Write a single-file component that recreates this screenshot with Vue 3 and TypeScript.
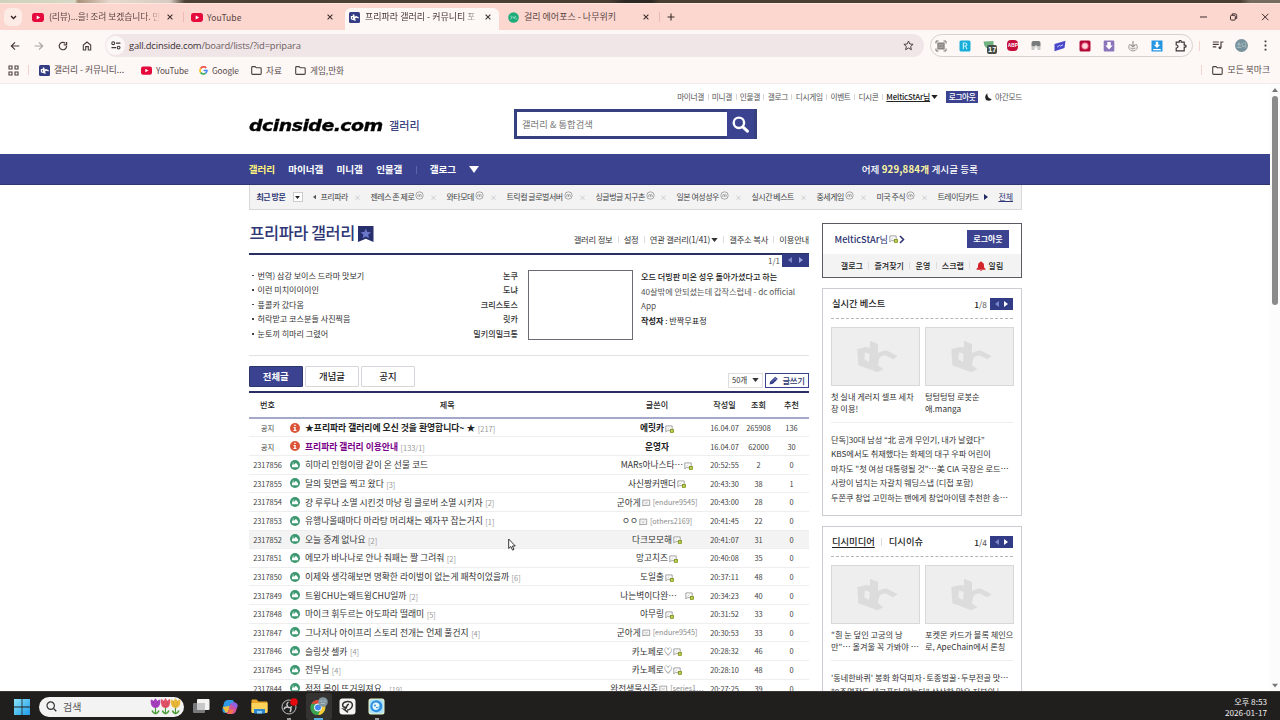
<script setup lang="ts">
interface Row {
  no: string
  kind: 'info' | 'pic'
  title: string
  replies?: string
  writer: string
  badge?: 'fixed' | 'half'
  id?: string
  date: string
  views: string
  rec: string
  cls?: string
}

interface Widget {
  titles: string[]
  page: string
  total: string
  cards: string[][]
  links: string[]
}

const utilLinks = ['마이너갤', '미니갤', '인물갤', '갤로그', '디시게임', '이벤트', '디시콘']

const recent = [
  { name: '프리파라', m: false },
  { name: '젠레스 존 제로', m: true },
  { name: '와타모데', m: true },
  { name: '트릭컬 글로벌서버', m: true },
  { name: '싱글벙글 지구촌', m: true },
  { name: '일본 여성성우', m: true },
  { name: '실시간 베스트', m: false },
  { name: '중세게임', m: true },
  { name: '미국 주식', m: true },
  { name: '트레이딩카드', m: false },
]

const issues = [
  ['번역) 삼강 보이스 드라마 맛보기', '논쿠'],
  ['이런 미치이이이인', '도냐'],
  ['픞콜카 갔다옴', '크리스토스'],
  ['허락받고 코스분들 사진찍음', '릿카'],
  ['눈토끼 히마리 그렸어', '밀키의밀크통'],
]

const rows: Row[] = [
  { no: '공지', kind: 'info', title: '★프리파라 갤러리에 오신 것을 환영합니다~ ★', replies: '217', writer: '에릿카', badge: 'fixed', date: '16.04.07', views: '265908', rec: '136', cls: 'notice' },
  { no: '공지', kind: 'info', title: '프리파라 갤러리 이용안내', replies: '133/1', writer: '운영자', date: '16.04.07', views: '62000', rec: '30', cls: 'notice visited' },
  { no: '2317856', kind: 'pic', title: '히마리 인형이랑 같이 온 선물 코드', writer: 'MARs아나스타⋯', badge: 'fixed', date: '20:52:55', views: '2', rec: '0' },
  { no: '2317855', kind: 'pic', title: '달의 뒷면을 찍고 왔다', replies: '3', writer: '사신짱커맨더', badge: 'fixed', date: '20:43:30', views: '38', rec: '1' },
  { no: '2317854', kind: 'pic', title: '걍 루루나 소멸 시킨것 마냥 링 클로버 소멸 시키자', replies: '2', writer: '군아게', badge: 'half', id: '[endure9545]', date: '20:43:00', views: '28', rec: '0' },
  { no: '2317853', kind: 'pic', title: '유행나올때마다 마라탕 머리채는 왜자꾸 잡는거지', replies: '1', writer: 'ㅇㅇ', badge: 'half', id: '[others2169]', date: '20:41:45', views: '22', rec: '0' },
  { no: '2317852', kind: 'pic', title: '오늘 중계 없나요', replies: '2', writer: '다크모모해', badge: 'fixed', date: '20:41:07', views: '31', rec: '0', cls: 'hover' },
  { no: '2317851', kind: 'pic', title: '에모가 바나나로 안나 줘패는 짤 그려줘', replies: '2', writer: '망고치즈', badge: 'fixed', date: '20:40:08', views: '35', rec: '0' },
  { no: '2317850', kind: 'pic', title: '이제와 생각해보면 명확한 라이벌이 없는게 패착이었을까', replies: '6', writer: '도일출', badge: 'fixed', date: '20:37:11', views: '48', rec: '0' },
  { no: '2317849', kind: 'pic', title: '트윙CHU는왜트윙CHU일까', replies: '2', writer: '나는벽이다완⋯', badge: 'fixed', date: '20:34:23', views: '40', rec: '0', cls: 'gap' },
  { no: '2317848', kind: 'pic', title: '마이크 휘두르는 아도파라 떨래미', replies: '5', writer: '야무링', badge: 'fixed', date: '20:31:52', views: '33', rec: '0' },
  { no: '2317847', kind: 'pic', title: '그나저나 아이프리 스토리 전개는 언제 풀건지', replies: '4', writer: '군아게', badge: 'half', id: '[endure9545]', date: '20:30:53', views: '33', rec: '0' },
  { no: '2317846', kind: 'pic', title: '슬링샷 셀카', replies: '4', writer: '카노페로♡', badge: 'fixed', date: '20:28:32', views: '46', rec: '0' },
  { no: '2317845', kind: 'pic', title: '전무님', replies: '4', writer: '카노페로♡', badge: 'fixed', date: '20:28:10', views: '48', rec: '0' },
  { no: '2317844', kind: 'pic', title: '점점 몸이 뜨거워져요..', replies: '19', writer: '완전생물신쥬', badge: 'half', id: '[series1⋯', date: '20:27:25', views: '39', rec: '0' },
]

const widgets: Widget[] = [
  {
    titles: ['실시간 베스트'],
    page: '1',
    total: '/8',
    cards: [['첫 실내 게러지 셀프 세차', '장 이용!'], ['텅텅텅텅 로봇순', '애.manga']],
    links: [
      '단독]30대 남성 “北 공개 무인기, 내가 날렸다”',
      'KBS에서도 취재했다는 화제의 대구 우파 어린이',
      '마차도 "첫 여성 대통령될 것"⋯美 CIA 국장은 로드⋯',
      '사랑이 넘치는 자갈치 웨딩스냅 (디첩 포함)',
      '두쫀쿠 창업 고민하는 팬에게 창업아이템 추천한 송⋯',
    ],
  },
  {
    titles: ['디시미디어', '디시이슈'],
    page: '1',
    total: '/4',
    cards: [['"흰 눈 덮인 고궁의 낭', '만"⋯ 올겨울 꼭 가봐야 ⋯'], ['포켓몬 카드가 블록 체인으', '로, ApeChain에서 론칭']],
    links: [
      "'동네한바퀴' 봉화 화덕피자·토종벌꿀·두부전골 맛⋯",
      '"8주명작도 세크폰다 맞는다" 삼삼한 많은 저분의 |',
    ],
  },
]
</script>

<template>
  <div class="screen">
    <svg class="defs" width="0" height="0">
      <symbol id="yt" viewBox="0 0 12 9"><rect width="12" height="9" rx="2.4" fill="#e5093c" /><path d="M4.7 2.5v4L8.2 4.5z" fill="#fff" /></symbol>
      <symbol id="dc" viewBox="0 0 11 11"><rect width="11" height="11" rx="1.5" fill="#343c83" /><path d="M1.800 4h2V2.200l1.700.6v1.600l1.800-.5 2.700 1.500-.6 1.200-2-.8-1.300.7v.9l1.200.7-1.200.6-4.300-1.500zM3 5v1.400l.9.3V5.200z" fill="#fff" fill-rule="evenodd" /></symbol>
      <symbol id="close" viewBox="0 0 6 6"><path d="M.6.6l4.800 4.800M5.400.6L.6 5.400" stroke="#40302f" stroke-width="1.100" /></symbol>
      <symbol id="folder" viewBox="0 0 11 9"><path d="M.7 7.500v-6q0-.9.9-.9h2.500l1.200 1.200h4q.9 0 .9.900v4.900q0 .8-.9.800H1.600q-.9 0-.9-.9z" fill="none" stroke="#4b4040" stroke-width="1.100" /></symbol>
      <symbol id="info" viewBox="0 0 10 10"><circle cx="5" cy="5" r="5" fill="#dd5538" /><path d="M4.200 1.800h1.500v1.300H4.200zM3.600 4h2.100v3h.8v1H3.500V7h.8V5h-.7z" fill="#fff" /></symbol>
      <symbol id="pic" viewBox="0 0 10 10"><circle cx="5" cy="5" r="5" fill="#3c9870" /><path d="M2 7.300V4.900l1.100-.8 1 .7L5.600 3l1 .5 1.500 2v1.800z" fill="#fff" /><circle cx="3.200" cy="3.100" r=".7" fill="#d8eee4" /></symbol>
      <symbol id="fixed" viewBox="0 0 9 8"><path d="M.8.9h6.400v4.800H2.300L.8 6.900z" fill="#fafafa" stroke="#8f918d" stroke-width=".8" /><path d="M2.500 4.400L4 2.800" stroke="#bbb" stroke-width=".7" /><rect x="5.200" y="4.300" width="3.500" height="3.300" fill="#a4b914" stroke="#68780e" stroke-width=".5" /><rect x="6.400" y="5.400" width="1" height="1.100" fill="#fff" /></symbol>
      <symbol id="half" viewBox="0 0 9 8"><path d="M.8 1.100h6.900v5.300H2L.8 7z" fill="#f8f8f8" stroke="#929292" stroke-width=".8" /><path d="M2.500 3.200L4 4.500l1.800-1.400" fill="none" stroke="#aaa" stroke-width=".8" /></symbol>
      <symbol id="down" viewBox="0 0 8 5"><path d="M0 0h8L4 5z" fill="currentColor" /></symbol>
      <symbol id="lt" viewBox="0 0 4 6"><path d="M4 0v6L0 3z" fill="currentColor" /></symbol>
      <symbol id="rt" viewBox="0 0 4 6"><path d="M0 0v6l4-3z" fill="currentColor" /></symbol>
    </svg>

    <div class="strip"></div>

    <div class="tabbar">
      <div class="tabsearch"><svg width="7" height="5" viewBox="0 0 7 5"><path d="M1 1l2.500 2.500L6 1" fill="none" stroke="#30201f" stroke-width="1.300" /></svg></div>
      <div class="tab t1"><svg width="12" height="9"><use href="#yt" /></svg><span class="fade">(리뷰)...을! 조려 보겠습니다. 만</span><svg class="x" width="6" height="6"><use href="#close" /></svg></div>
      <i class="tabsep"></i>
      <div class="tab t2"><svg width="12" height="9"><use href="#yt" /></svg><span>YouTube</span><svg class="x" width="6" height="6"><use href="#close" /></svg></div>
      <div class="tab t3"><svg width="11" height="11"><use href="#dc" /></svg><span class="fade">프리파라 갤러리 - 커뮤니티 포</span><svg class="x" width="6" height="6"><use href="#close" /></svg></div>
      <div class="tab t4"><svg width="11" height="11" viewBox="0 0 11 11"><circle cx="5.500" cy="5.500" r="5.300" fill="#20ab7b" /><path d="M2.400 4l1.800 1.500-1.800 1.500M5 4.400l1.200 2L7.600 4M7.500 6.800h1.400" fill="none" stroke="#b9f0dc" stroke-width=".8" /></svg><span>걸리 에어포스 - 나무위키</span><svg class="x" width="6" height="6"><use href="#close" /></svg></div>
      <i class="tabsep"></i>
      <svg class="plus" width="8" height="8" viewBox="0 0 8 8"><path d="M4 .5v7M.5 4h7" stroke="#3c2c2b" stroke-width="1.100" /></svg>
      <svg class="wins" width="72" height="10" viewBox="0 0 72 10"><path d="M1 5h7M63 1.800l6.400 6.400M69.400 1.800L63 8.200" stroke="#3d2c2b" stroke-width="1" /><rect x="31.500" y="3.300" width="4.800" height="4.800" rx="1" fill="none" stroke="#3d2c2b" /><path d="M33.200 3V1.900h3q1.500 0 1.500 1.500v3H36.600" fill="none" stroke="#3d2c2b" /></svg>
    </div>

    <div class="toolbar">
      <div class="navicons">
        <svg width="10" height="10" viewBox="0 0 10 10"><path d="M9.300 5H1.400M5 1.300L1.300 5 5 8.700" fill="none" stroke="#4a3c3c" stroke-width="1.200" /></svg>
        <svg width="10" height="10" viewBox="0 0 10 10"><path d="M.7 5h7.900M5 1.300L8.700 5 5 8.700" fill="none" stroke="#aaa0a0" stroke-width="1.100" /></svg>
        <svg width="10" height="10" viewBox="0 0 10 10"><path d="M8.600 5A3.700 3.700 0 1 1 7.400 2.300M8.600.9v2.900H5.700" fill="none" stroke="#4a3c3c" stroke-width="1.200" /></svg>
        <svg width="10" height="10" viewBox="0 0 10 10"><path d="M1.300 9V4.100L5 1l3.700 3.100V9H6.300V5.600H3.700V9z" fill="none" stroke="#4a3c3c" stroke-width="1.100" /></svg>
      </div>
      <div class="address">
        <div class="site"><svg width="10" height="9" viewBox="0 0 10 9"><circle cx="2.200" cy="2.200" r="1.400" fill="none" stroke="#3f3434" stroke-width="1.100" /><circle cx="7.600" cy="6.600" r="1.400" fill="none" stroke="#3f3434" stroke-width="1.100" /><path d="M5 2.200h4.400M.5 6.600h4.500" stroke="#3f3434" stroke-width="1.200" /></svg></div>
        <span class="url"><b>gall.dcinside.com</b>/board/lists/?id=pripara</span>
        <svg class="star" width="11" height="11" viewBox="0 0 11 11"><path d="M5.500 1l1.300 3 3.300.3-2.500 2.200.8 3.200-2.900-1.700-2.900 1.700.8-3.200L.9 4.300 4.200 4z" fill="none" stroke="#4d3e3f" stroke-width="1" /></svg>
      </div>
      <div class="exts">
        <svg width="12" height="12" viewBox="0 0 12 12"><path d="M1 3.500V1h2.500M8.500 1H11v2.500M11 8.500V11H8.500M3.500 11H1V8.500" fill="none" stroke="#77726f" /><rect x="2.300" y="2.500" width="7.400" height="7" fill="#888480" /><path d="M3.500 4.500h5M3.500 6h5M3.500 7.500h5" stroke="#bbb8b4" stroke-width=".6" /></svg>
        <svg width="12" height="12" viewBox="0 0 12 12"><rect x=".5" y=".5" width="11" height="11" rx="1.500" fill="#16add8" /><path d="M4.300 9.300V3h2q1.600 0 1.600 1.500T6.300 6h-2M6.300 6l1.800 3.200" fill="none" stroke="#c5f3ff" stroke-width="1.100" /></svg>
        <span class="ext17"><svg width="12" height="12" viewBox="0 0 12 12"><path d="M.5 1.500l10-.5v4q0 3-3 4.500Q1 9 .5 1.500z" fill="#70b282" /></svg><i>17</i></span>
        <span class="abp">ABP</span>
        <svg width="12" height="12" viewBox="0 0 12 12"><path d="M1.500 3q0-2 2-2h5q2 0 2 2v3h-9z" fill="#777b79" /><path d="M1.500 6h9v4h-3V7.300h-3V10h-3z" fill="#c5c7c5" /><path d="M6 5v3" stroke="#eee" /></svg>
        <svg width="12" height="12" viewBox="0 0 12 12"><path d="M.5 4l11-3.200L10.500 8 .5 11.300z" fill="#4a49ca" /><path d="M3.200 7l2.400-1.600.8.700L9 4.700" stroke="#cfd0ff" fill="none" /></svg>
        <svg width="12" height="12" viewBox="0 0 12 12"><rect x=".5" y=".5" width="11" height="11" rx="1.500" fill="#b20936" /><circle cx="6" cy="6" r="3.300" fill="#ffd4dc" stroke="#e85074" stroke-width=".8" /></svg>
        <svg width="12" height="12" viewBox="0 0 12 12"><rect x=".7" y=".5" width="10.600" height="11" rx="1" fill="#8c74b9" /><path d="M4.300 2h3.400v3.500h2L6 9.600 2.300 5.500h2z" fill="#fff" /></svg>
        <svg width="12" height="12" viewBox="0 0 12 12"><path d="M6 1v6M3.500 4.500L6 7l2.500-2.500" stroke="#999491" fill="none" stroke-width="1.200" /><path d="M3 4q-2 2-1 4.500Q3.500 11 6 11t4-2.500Q11 6 9 4M3.500 8Q6 10 8.500 8" fill="none" stroke="#9b9793" /></svg>
        <svg width="12" height="12" viewBox="0 0 12 12"><rect x=".5" y=".5" width="11" height="11" fill="#2796e2" /><path d="M4.800 1.800h2.400v3h2L6 8 2.800 4.800h2zM2.200 9h7.600v1.200H2.200z" fill="#fff" /></svg>
        <svg width="12" height="12" viewBox="0 0 12 12"><path d="M1.200 2.200h3V1.300q0-.8 1-.8t1 .8v.9h3v3h.9q1 0 1 1t-1 1h-.9v3.600h-8V8q1.800 0 1.800-1.500T1.200 5z" fill="none" stroke="#3d3436" stroke-width="1.200" /></svg>
      </div>
      <i class="sep"></i>
      <svg class="music" width="12" height="9" viewBox="0 0 12 9"><path d="M.8 1h6M.8 3.400h6M.8 5.800h3.500M9 6.500V1h2.500" fill="none" stroke="#4a3d3d" stroke-width="1.200" /><circle cx="7.900" cy="6.800" r="1.400" fill="#4a3d3d" /></svg>
      <span class="profile">소디</span>
      <svg class="dots" width="3" height="11" viewBox="0 0 3 11"><path d="M.6.500h1.800v1.800H.6zM.6 4.600h1.800v1.800H.6zM.6 8.700h1.800v1.800H.6z" fill="#44393a" /></svg>
    </div>

    <div class="bookmarks">
      <svg width="11" height="11" viewBox="0 0 11 11"><path d="M1 1h3v3H1zM7 1h3v3H7zM1 7h3v3H1zM7 7h3v3H7z" fill="none" stroke="#4c4041" stroke-width="1.100" /></svg>
      <i class="sep"></i>
      <span class="bm b1"><svg width="11" height="11"><use href="#dc" /></svg>갤러리 - 커뮤니티...</span>
      <span class="bm b2"><svg width="11" height="9"><use href="#yt" /></svg>YouTube</span>
      <span class="bm b3"><svg width="9" height="9" viewBox="0 0 10 10"><g fill="none" stroke-width="1.700"><path d="M8 2.200A3.900 3.900 0 0 0 1.800 2.800" stroke="#ea4335" /><path d="M1.800 2.800a3.900 3.900 0 0 0 0 4.400" stroke="#fbbc05" /><path d="M1.800 7.200A3.900 3.900 0 0 0 7.400 8" stroke="#34a853" /><path d="M7.400 8A3.900 3.900 0 0 0 8.900 5.100H5.200" stroke="#4285f4" /></g></svg>Google</span>
      <span class="bm b4"><svg width="11" height="9"><use href="#folder" /></svg>자료</span>
      <span class="bm b5"><svg width="11" height="9"><use href="#folder" /></svg>게임,만화</span>
      <i class="sep s2"></i>
      <span class="bm b6"><svg width="11" height="9"><use href="#folder" /></svg>모든 북마크</span>
    </div>

    <div class="viewport">
      <div class="page">
        <header class="top">
          <div class="util">
            <template v-for="u in utilLinks" :key="u"><span>{{ u }}</span><i></i></template>
            <b>MelticStAr님</b><svg class="caret" width="7" height="4"><use href="#down" /></svg>
            <span class="logout">로그아웃</span>
            <svg class="moon" width="7" height="8" viewBox="0 0 7 8"><path d="M2.500.2Q1.600 4.700 6.800 6.200 5 8.200 2.500 7.600 0 6.800.2 4 .4 1.200 2.500.2z" fill="#222" /></svg>
            <span>야간모드</span>
          </div>
          <div class="brand">
            <span class="logo">dcinside.com</span><span class="logo2">갤러리</span>
            <div class="search">
              <span>갤러리 &amp; 통합검색</span>
              <div><svg width="17" height="17" viewBox="0 0 17 17"><circle cx="6.900" cy="6.800" r="5.200" fill="none" stroke="#fff" stroke-width="2.400" /><path d="M10.800 10.800l4.600 4.400" stroke="#fff" stroke-width="3" stroke-linecap="round" /></svg></div>
            </div>
          </div>
        </header>

        <nav class="gnb">
          <span class="on">갤러리</span><span>마이너갤</span><span>미니갤</span><span>인물갤</span><i></i><span>갤로그</span><svg width="10" height="7" viewBox="0 0 10 7"><path d="M0 0h10L5 7z" fill="#fff" /></svg>
          <p>어제 <b>929,884개</b> 게시글 등록</p>
        </nav>

        <div class="recent">
          <b>최근 방문</b>
          <span class="drop"><svg width="5" height="3"><use href="#down" /></svg></span>
          <svg class="prev" width="3" height="6"><use href="#lt" /></svg>
          <div class="visits">
            <span v-for="r in recent" :key="r.name">{{ r.name }}<svg v-if="r.m" width="9" height="9" viewBox="0 0 9 9"><circle cx="4.500" cy="4.500" r="3.700" fill="none" stroke="#888" stroke-width=".7" /><path d="M2.800 6V3.900q.8-.7 1.700 0V6M4.500 3.900q.9-.7 1.700 0V6" fill="none" stroke="#777" stroke-width=".6" /></svg><em v-if="r.name !== '트레이딩카드'">×</em></span>
          </div>
          <svg class="next" width="4" height="6"><use href="#rt" /></svg>
          <u>전체</u>
        </div>

        <main class="main">
          <section class="left">
            <div class="ghead">
              <h1>프리파라 갤러리</h1>
              <svg width="16" height="16" viewBox="0 0 16 16"><path d="M0 0h15.500v16L7.800 12.800 0 16z" fill="#272f6d" /><path d="M7.800 2.500l1.500 3.400 3.700.4-2.800 2.400.8 3.600-3.200-1.900-3.200 1.900.8-3.600-2.800-2.400 3.700-.4z" fill="#6c78c9" /></svg>
              <div class="gmenu"><span>갤러리 정보</span><i></i><span>설정</span><i></i><span>연관 갤러리(1/41)<svg width="6" height="4"><use href="#down" /></svg></span><i></i><span>갤주소 복사</span><i></i><span>이용안내</span></div>
            </div>
            <div class="issue">
              <ul>
                <li v-for="it in issues" :key="it[0]"><span><i></i>{{ it[0] }}</span><b>{{ it[1] }}</b></li>
              </ul>
              <div class="frame"></div>
              <div class="digest">
                <b>오드 더빙판 미온 성우 돌아가셨다고 하는</b>
                <p>40살밖에 안되셨는데 갑작스럽네 - dc official<br />App</p>
                <span class="by"><b>작성자</b> : 반짝무표정</span>
              </div>
              <div class="pager"><span>1/1</span><div class="arrows dim"><svg width="4" height="6"><use href="#lt" /></svg><svg width="4" height="6"><use href="#rt" /></svg></div></div>
            </div>
            <div class="tabs">
              <span class="on">전체글</span><span>개념글</span><span>공지</span>
              <div class="sel">50개<svg width="7" height="4"><use href="#down" /></svg></div>
              <div class="write"><svg width="10" height="9" viewBox="0 0 10 9"><path d="M.5 8.500l.8-3L6.200.8l2.600 2.300-4.900 4.700z" fill="#303a86" /><path d="M2.500 6L7 2M5.300 1.700l2.600 2.300" stroke="#aab0df" stroke-width=".5" /></svg>글쓰기</div>
            </div>
            <div class="table">
              <div class="row head"><span>번호</span><span>제목</span><span>글쓴이</span><span>작성일</span><span>조회</span><span>추천</span></div>
              <div v-for="r in rows" :key="r.date + r.title" class="row" :class="r.cls">
                <span class="num">{{ r.no }}</span>
                <span class="title"><svg width="10" height="10"><use :href="'#' + r.kind" /></svg><a>{{ r.title }}</a><em v-if="r.replies">[{{ r.replies }}]</em></span>
                <span class="writer"><a>{{ r.writer }}</a><svg v-if="r.badge" width="9" height="8"><use :href="'#' + r.badge" /></svg><em v-if="r.id">{{ r.id }}</em></span>
                <span class="num">{{ r.date }}</span>
                <span class="num">{{ r.views }}</span>
                <span class="num">{{ r.rec }}</span>
              </div>
            </div>
          </section>

          <aside class="right">
            <div class="login">
              <div class="me"><b>MelticStAr</b>님<svg width="9" height="8"><use href="#fixed" /></svg><svg width="6" height="9" viewBox="0 0 6 9"><path d="M1 1l3.500 3.500L1 8" fill="none" stroke="#2a3170" stroke-width="1.500" /></svg><span>로그아웃</span></div>
              <div class="mymenu"><span>갤로그</span><i></i><span>즐겨찾기</span><i></i><span>운영</span><i></i><span>스크랩</span><i></i><span><svg width="10" height="10" viewBox="0 0 10 10"><path d="M5 .5q1 0 1 .8 2 .7 2 3v2L9.500 8v.7H.5V8L2 6.300v-2q0-2.300 2-3 0-.8 1-.8zM3.800 9h2.400L5 10z" fill="#d3242b" /></svg>알림</span></div>
            </div>
            <div v-for="w in widgets" :key="w.titles[0]" class="widget">
              <div class="whead">
                <template v-for="(t, i) in w.titles" :key="t"><i v-if="i"></i><b :class="{ under: w.titles.length > 1 && i === 0 }">{{ t }}</b></template>
                <span><b>{{ w.page }}</b>{{ w.total }}</span>
                <div class="arrows"><svg width="4" height="6"><use href="#lt" /></svg><svg width="4" height="6"><use href="#rt" /></svg></div>
              </div>
              <div class="cards">
                <div v-for="c in w.cards" :key="c[0]">
                  <div class="thumb"><svg width="88" height="58" viewBox="49 524 264 174"><path d="M125 587L151 581L163 583V562L187 572V599Q202 589 215 592L246 609L232 618L212 607Q196 605 190 618L187 636L203 648L185 657L128 636ZM148 597L162 602L160 626L146 618Z" fill="#dcdcdd" fill-rule="evenodd" /></svg></div>
                  <p>{{ c[0] }}<br />{{ c[1] }}</p>
                </div>
              </div>
              <div class="links"><p v-for="l in w.links" :key="l">{{ l }}</p></div>
            </div>
          </aside>
        </main>
      </div>
      <div class="scroll"><svg width="6" height="4" viewBox="0 0 6 4"><path d="M0 4h6L3 0z" fill="#777" /></svg><div></div><svg width="6" height="5"><use href="#down" /></svg></div>
    </div>

    <footer class="taskbar">
      <svg class="win" width="16" height="16" viewBox="0 0 16 16"><defs><linearGradient id="wg" x2="1" y2="1"><stop stop-color="#8be4fb" /><stop offset="1" stop-color="#1d9ce8" /></linearGradient></defs><path d="M0 0h7.600v7.600H0zM8.400 0H16v7.600H8.400zM0 8.400h7.600V16H0zM8.400 8.400H16V16H8.400z" fill="url(#wg)" /></svg>
      <div class="find">
        <svg width="11" height="11" viewBox="0 0 11 11"><circle cx="4.700" cy="4.600" r="3.700" fill="none" stroke="#333" stroke-width="1.200" /><path d="M7.500 7.400l2.800 2.800" stroke="#333" stroke-width="1.300" /></svg>
        <span>검색</span>
        <svg width="31" height="17" viewBox="0 0 31 17"><g stroke="#4d9c3c" fill="none"><path d="M5.500 8v8M15.500 8v8M25.500 8v8" stroke-width="1.200" /><path d="M5.500 15.800Q3 15 2 12.500M5.500 15.800Q8 15 9 12.500M15.500 15.800Q13 15 12.500 12.500M15.500 15.800Q18 15 19 12.500M25.500 15.800Q23 15 22.500 12.500M25.500 15.800Q28 15 29 12.500" stroke-width="1.600" /></g><path d="M.8 1.500q2 0 2.700 1.500L5.500.3l2 2.700Q8.200 1.500 10.200 1.500 11.200 10 5.500 10T.8 1.500z" fill="#a83fc0" /><path d="M11 1q2 .3 2.500 2l2-3 2 3q.5-1.700 2.500-2 1 9-4.500 9T11 1z" fill="#e4536a" /><path d="M20.800 1.500q2 0 2.700 1.500l2-2.700 2 2.700q.7-1.500 2.700-1.500 1 8.500-4.700 8.500t-4.700-8.500z" fill="#ecba3a" /><path d="M3.500 3q-.5 4 2 6 2.500-2 2-6M13.500 3q-.5 4 2 6 2.500-2 2-6M23.500 3q-.5 4 2 6 2.500-2 2-6" fill="none" stroke="#0002" stroke-width=".8" /></svg>
      </div>
      <svg class="i1" width="17" height="15" viewBox="0 0 17 15"><rect x="0" y="4" width="12" height="10" rx="1" fill="#77797a" /><rect x="4" y="0" width="12.500" height="11" rx="1" fill="#f3f3f3" /><path d="M4 4h8v7H4z" fill="#c8c8c8" /></svg>
      <svg class="i2" width="16" height="16" viewBox="0 0 16 16"><path d="M6 1h4q1.500 0 2 2l.5 2-4 .5L6 12q-.5 2-2.500 2-3.500 0-3-4l1.500-6Q3 1 6 1z" fill="#2f9be8" /><path d="M.6 8L4 14q2 0 2.500-2L8 7z" fill="#f0bf3f" /><path d="M10 15H6q-1.200 0-1.500-1.500 1.500 0 2-2L8.500 5q.5-1.500 3-1.500 4 0 4 3.500L14 12q-1 3-4 3z" fill="#d154a2" /><path d="M9 5q.5-2 3.500-1.500 3 .5 3 3L15 9l-3-1z" fill="#8a63e4" /><path d="M7 10l5 1-2 4H6z" fill="#f4714f" /></svg>
      <svg class="i3" width="17" height="15" viewBox="0 0 17 15"><path d="M.5 1.500Q.5.500 1.500.500h4l2 2h8q1 0 1 1V13H.5z" fill="#e9a829" /><path d="M.5 4h16v9q0 1-1 1h-14q-1 0-1-1z" fill="#fcd35b" /><path d="M3 10h11v4.500H3z" fill="#2d87cf" /><path d="M6 12h5v2.500H6z" fill="#8ed0f4" /></svg>
      <svg class="i4 run" width="17" height="27" viewBox="0 0 17 17"><circle cx="8" cy="9" r="7" fill="#222" stroke="#bdbdbd" stroke-width="1" /><path d="M7.500 4q-3 2-.5 5 1.500 1.500 4-.5M7 9q-3.500-.5-4 2.500M9 9q2 2 0 5" fill="none" stroke="#ccc" stroke-width="1.400" /><circle cx="13" cy="4" r="3.800" fill="#e50910" /></svg>
      <div class="i5"><svg width="20" height="19" viewBox="0 0 20 19"><circle cx="9" cy="10.500" r="7.500" fill="#3ca350" /><path d="M2.500 6.800A7.500 7.500 0 0 1 15.500 6.800H9z" fill="#e34334" /><path d="M2.500 6.800l4 7L9 18Q3 18 1.700 12.500 1 9 2.500 6.800z" fill="#3ca350" /><path d="M15.500 6.800Q18 12.500 13.500 16.500 11.500 18 9 18l3.800-7.500L9 6.800z" fill="#f6c832" /><circle cx="9" cy="10.500" r="3.600" fill="#4286ee" stroke="#fff" stroke-width="1" /><circle cx="14" cy="5" r="4.800" fill="#8296a0" /><path d="M11.500 4h2M14.800 4h2M11.800 6.500h4" stroke="#c6d2d6" stroke-width=".7" /></svg></div>
      <svg class="i6" width="17" height="17" viewBox="0 0 17 17"><rect x=".5" y=".5" width="16" height="16" rx="3" fill="#f5f4f3" /><path d="M6.800 9.300Q3.800 9.500 3.600 7.200 3.600 4.200 8.300 3.500 13.400 3.300 13.400 7q-.3 4-5.200 5.300M10 6.300Q8.300 6.200 7.700 8.500 7.200 11.500 4.800 11.200L9 14.300" fill="none" stroke="#333" stroke-width="1.500" /></svg>
      <svg class="i7 run" width="17" height="27" viewBox="0 0 17 17"><rect x=".5" y=".5" width="16" height="16" rx="2.500" fill="#e8f6c4" /><rect x="1.500" y="1.500" width="14" height="14" rx="2" fill="#aee0fa" /><circle cx="8.300" cy="8.300" r="6" fill="#2c91df" /><path d="M4.500 8q0-3.500 3.500-3.500T11.500 8t-3.300 4Q4.500 12 4.500 8z" fill="#e5f5fd" /><circle cx="7" cy="7.500" r="1" fill="#2c91df" /><path d="M8 9.500q2 1 3-1" stroke="#2c91df" fill="none" /></svg>
      <div class="clock">오후 8:53<br />2026-01-17</div>
    </footer>

    <svg class="cursor" width="8" height="13" viewBox="0 0 8 13"><path d="M.7 1v9.500l2.200-2 1.600 3.600 1.500-.7-1.600-3.400h2.900z" fill="#fff" stroke="#222" stroke-width=".9" /></svg>
  </div>
</template>

<style>
body { margin: 0; overflow: hidden; }
</style>

<style scoped>
* { box-sizing: border-box; margin: 0; padding: 0; }
.screen { position: relative; width: 1280px; height: 720px; overflow: hidden; display: flex; flex-direction: column; background: #fff; font-family: 'Noto Sans CJK KR', 'Noto Sans', sans-serif; font-size: 8.67px; color: #333; white-space: nowrap; line-height: 1; }
.defs { position: absolute; }
svg { flex: none; display: block; }
i, em { font-style: normal; }

.strip { height: 3px; flex: none; background: linear-gradient(90deg, #cfd2bc 0, #d5d8c4 75px, #a9917c 78px, #e6d8cd 110px, #d8ccc2 170px, #4d4035 185px, #4a3e33 610px, #2b2722 625px, #2b2722 650px, #4a3e33 660px, #4a3e33 1240px, #776a5f 1250px); }
.tabbar { height: 27px; flex: none; display: flex; align-items: center; background: #fbd7d0; border-top: 1px solid #fde6e0; font-size: 9px; color: #5b4542; }
.tabsearch { width: 18px; height: 18px; margin-left: 4px; border-radius: 6px; background: #fdebe6; display: flex; align-items: center; justify-content: center; }
.tab { display: flex; align-items: center; height: 23px; margin-top: 4px; padding-bottom: 4px; }
.tab span { margin-left: 5px; flex: 1; overflow: hidden; line-height: 16px; }
.tab .x { margin-left: 6px; }
.fade { mask-image: linear-gradient(90deg, #000 86%, transparent); }
.tabsep { width: 1px; height: 10px; background: #edbab1; }
.t1 { width: 151px; margin-left: 10px; padding-right: 10px; }
.t1 span { flex: 0 0 112px; font-size: 8.800px; letter-spacing: -.1px; }
.t2 { width: 161px; padding: 0 12.500px 4px 7px; font-size: 8.600px; }
.t2 span { margin-left: 4px; }
.t3 { width: 154px; padding: 0 8px 4px 4px; background: #fdf8f6; border-radius: 6px 6px 0 0; color: #463533; }
.t4 { width: 160px; padding: 0 10px 4px 9px; }
.plus { margin-left: 6.500px; }
.wins { margin-left: auto; margin-right: 9.500px; }

.toolbar { height: 30px; flex: none; background: #fdf8f6; display: flex; align-items: center; padding-top: 1px; }
.navicons { display: flex; gap: 14px; margin-left: 10px; width: 95px; }
.address { width: 819px; height: 23px; border-radius: 12px; background: #f0e6e8; display: flex; align-items: center; padding: 0 10px 0 1px; }
.site { width: 19px; height: 19px; border-radius: 50%; background: #fdf8f8; display: flex; align-items: center; justify-content: center; }
.url { margin-left: 4px; font: 9.4px/14px 'Open Sans', sans-serif; letter-spacing: -.15px; color: #6d5c5f; }
.url b { font-weight: 400; color: #3c3033; }
.star { margin-left: auto; }
.exts { width: 263px; height: 23px; margin-left: 6px; border: 1px solid #d9cfcd; border-radius: 12px; display: flex; align-items: center; padding: 0 5px 0 4px; justify-content: space-between; }
.ext17 { position: relative; width: 12px; height: 12px; }
.ext17 i { position: absolute; left: 4px; top: 5px; width: 10px; height: 9px; border-radius: 2px; background: #444b45; color: #fff; font: 700 7.500px/9px 'Liberation Sans', sans-serif; text-align: center; }
.abp { width: 11px; height: 11px; border-radius: 4px; background: #c60d3a; color: #fff; font: 700 4.800px/11px 'Liberation Sans', sans-serif; text-align: center; }
.sep { width: 1px; height: 10px; background: #f3d3cd; }
.toolbar .sep { margin-left: 6px; }
.music { margin-left: 12px; }
.profile { width: 13px; height: 13px; margin-left: 11px; border-radius: 50%; background: #78929d; color: #c4d4d9; font-size: 5.500px; line-height: 13px; text-align: center; }
.dots { margin-left: 16px; }

.bookmarks { height: 24px; flex: none; background: #fdf8f6; border-bottom: 1px solid #f1ebe9; display: flex; align-items: center; padding: 0 0 3px 8px; font-size: 8.300px; color: #58494a; }
.bookmarks > .sep { margin: 0 10px 0 9px; }
.bm { display: flex; align-items: center; gap: 4px; }
.b1 { width: 102px; font-size: 8.700px; }
.b2 { width: 58px; letter-spacing: -.1px; }
.b3 { width: 51.500px; letter-spacing: -.1px; }
.b4 { width: 44px; gap: 4.500px; font-size: 8.600px; }
.b5 { gap: 4.500px; font-size: 8.600px; }
.b6 { gap: 5px; margin-right: 10px; font-size: 8.800px; }
.bookmarks > .s2 { margin: 0 10px 0 auto; }

.viewport { height: 607px; flex: none; display: flex; overflow: hidden; }
.page { width: 1270px; flex: none; background: #fff; }
.scroll { width: 10px; background: #fdfcfc; display: flex; flex-direction: column; align-items: center; padding: 4px 0 3px; color: #777; }
.scroll div { width: 5.500px; height: 209px; margin: 4px 0 auto; border-radius: 3px; background: #8b8b8b; }

.top { height: 70px; padding-left: 248px; width: 1022px; }
.util { height: 25px; display: flex; align-items: center; justify-content: flex-end; font-size: 7.700px; letter-spacing: -.35px; color: #555; }
.util i { width: 1px; height: 6px; background: #d5d5d5; margin: 0 3.300px 0 3.500px; }
.util b { font-size: 7.900px; font-weight: 500; letter-spacing: -.2px; color: #222; text-decoration: underline; }
.caret { margin: 0 8px 0 1px; color: #222; }
.logout { width: 32px; height: 12px; line-height: 12px; background: #3b4390; color: #fff; text-align: center; font-weight: 500; margin-right: 7px; }
.moon { margin-right: 3px; }
.brand { display: flex; align-items: center; height: 30px; }
.logo { width: 135px; padding: 2px 0 0 1px; font: italic 700 18.900px/20px 'DejaVu Sans', sans-serif; letter-spacing: -.5px; color: #000; -webkit-text-stroke: .4px #000; transform: scaleY(.82); }
.logo2 { width: 131px; padding-left: 6px; padding-top: 4px; font-size: 11.100px; font-weight: 500; color: #3b4380; }
.search { width: 243px; height: 30px; border: 3px solid #36407f; background: #fff; display: flex; align-items: center; font-size: 9.300px; color: #777; }
.search span { width: 210px; padding: 1px 0 0 5px; letter-spacing: .05px; }
.search div { width: 27px; height: 30px; flex: none; background: #3b4390; display: flex; align-items: center; justify-content: center; }

.gnb { height: 30.500px; background: #3b4390; border-bottom: 1px solid #2f366f; display: flex; align-items: center; padding: 2px 0 0 248.700px; color: #fff; font-size: 9.600px; font-weight: 700; }
.gnb span { margin-right: 13.400px; letter-spacing: -.1px; }
.gnb .on { color: #fff27c; }
.gnb i { width: 1px; height: 8px; background: #5b63a8; margin: 0 13px 0 0; }
.gnb p { margin: 0 292px 0 auto; font-weight: 500; font-size: 9.600px; letter-spacing: .05px; }
.gnb p b { color: #fdf7a0; font-weight: 700; letter-spacing: .2px; }

.recent { width: 773px; height: 25px; margin-left: 248.500px; background: #f3f3f4; border: 1px solid #d8d8dc; border-top: 0; display: flex; align-items: center; font-size: 8px; letter-spacing: -.5px; color: #444; padding-top: 1px; }
.recent > b { width: 43px; padding-left: 7px; color: #2f3775; font-weight: 700; }
.drop { width: 10px; height: 10px; border: 1px solid #ccc; background: #fff; display: flex; align-items: center; justify-content: center; color: #222; }
.prev { margin: 0 5px 0 10px; color: #555; }
.visits { display: grid; grid-template-columns: 50px 76px 60px 89px 81px 75px 65px 60px 61px 46px; }
.visits span { display: flex; align-items: center; }
.visits svg { margin: -3px 0 0 1px; }
.visits em { margin: 0 10px 0 auto; color: #bbb; font-size: 7px; }
.next { color: #222a60; }
.recent u { margin-left: 11px; color: #2f3775; letter-spacing: -.1px; }

.main { display: flex; gap: 13px; padding-left: 248.500px; }
.left { width: 560.500px; }
.ghead { height: 45px; border-bottom: 2px solid #292f63; display: flex; align-items: flex-end; padding-bottom: 9px; }
h1 { width: 109.500px; padding-left: 1px; font-size: 16.400px; font-weight: 500; line-height: 24px; letter-spacing: -.5px; color: #2f3777; }
.ghead > svg { margin-bottom: 2px; }
.gmenu { margin-left: auto; display: flex; align-items: center; font-size: 8.300px; letter-spacing: -.2px; color: #333; }
.gmenu i { width: 1px; height: 7px; background: #ddd; margin: 0 5.200px 0 5px; }
.gmenu svg { display: inline-block; width: 7px; margin-left: 1px; vertical-align: 1px; }
.issue { position: relative; height: 101px; border-bottom: 1px solid #e2e2e2; display: flex; }
.issue ul { width: 269.500px; padding-top: 14px; margin-right: 10px; list-style: none; }
.issue li { height: 14.650px; line-height: 14.650px; display: flex; justify-content: space-between; font-size: 8.100px; padding-left: 3.500px; color: #333; }
.issue li i { display: inline-block; width: 1.500px; height: 1.500px; margin-right: 4px; vertical-align: 2.500px; background: #444; }
.issue li b { font-weight: 500; }
.frame { width: 105px; height: 70px; margin-top: 15px; border: 1px solid #6b6b73; }
.digest { margin: 15px 0 0 8px; font-size: 8.150px; }
.digest > b { display: block; line-height: 14px; font-weight: 500; color: #222; }
.digest p { margin-top: 1.500px; line-height: 13.700px; color: #555; font-size: 8.200px; }
.by { display: block; margin-top: 2px; line-height: 14px; color: #222; }
.by b { font-weight: 700; }
.pager { position: absolute; right: 0; top: -1px; display: flex; align-items: center; gap: 2px; font-size: 8px; color: #555; }
.pager > span { padding-top: 1px; }
.arrows { width: 23px; height: 12px; background: #323b85; color: #fff; display: flex; align-items: center; justify-content: space-around; padding: 0 2px; }
.arrows svg:first-child { color: #7e86c8; }
.arrows.dim { width: 27px; height: 13.500px; color: #9aa1dc; }
.tabs { display: flex; align-items: flex-start; height: 35px; padding-top: 10px; }
.tabs > span { width: 54px; height: 21px; margin-right: 2px; border: 1px solid #d5d5db; border-radius: 1px; text-align: center; line-height: 19px; font-size: 9.400px; font-weight: 500; color: #222; }
.tabs > .on { width: 54.500px; background: #3b4390; border-color: #2d356f; color: #fff; font-weight: 700; }
.sel { width: 35px; height: 15px; margin: 7px 2px 0 auto; border: 1px solid #ddd; display: flex; align-items: center; justify-content: space-between; padding: 0 3px; font-size: 7.500px; }
.write { width: 44px; height: 15px; margin-top: 7px; border: 1px solid #3b4390; display: flex; align-items: center; justify-content: center; gap: 3px; font-size: 8.400px; font-weight: 500; color: #2d356f; letter-spacing: -.3px; }

.table { border-top: 2px solid #292f63; }
.row { display: grid; grid-template-columns: 38px 321.500px 98px 37px 31px 35px; height: 18.640px; align-items: center; border-bottom: 1px solid #eee; text-align: center; }
.head { height: 26.300px; border-bottom: 2px solid #a4a8c8; font-size: 8.100px; font-weight: 500; color: #222; }
.num { font-size: 7.400px; color: #444; }
.title { display: flex; align-items: center; padding-left: 3.500px; font-size: 8.800px; color: #333; }
.title a { margin-left: 5px; line-height: 17px; }
.title em { margin-left: 2.500px; padding-top: 2px; color: #999; font-size: 7.400px; }
.writer { display: flex; align-items: center; justify-content: center; font-size: 8.700px; color: #333; }
.writer a { line-height: 17px; }
.writer svg { margin: 2px 0 0 1px; }
.writer em { margin-left: 2px; padding-top: 1px; font-size: 7.200px; color: #8a8a8a; }
.notice .title a, .notice .writer a { font-weight: 700; color: #222; }
.notice.visited .title a { color: #770088; }
.hover { background: #f3f3f3; }
.gap .writer svg { margin-left: 8px; }

.right { width: 200px; padding-top: 13.300px; }
.login { height: 55px; border: 1px solid #5a5a66; margin-bottom: 10px; }
.me { height: 30px; display: flex; align-items: center; padding: 1px 12px 0 11.500px; font-size: 9.200px; color: #2a3170; }
.me b { font-weight: 500; }
.me svg { margin-left: 1px; }
.me span { width: 42px; height: 18px; margin-left: auto; background: #3b4390; color: #fff; font-size: 8px; font-weight: 700; line-height: 18px; text-align: center; }
.mymenu { height: 23px; background: #f3f3f4; display: flex; align-items: center; padding: 1px 0 0 17.800px; font-size: 8px; font-weight: 500; color: #222; }
.mymenu i { width: 1px; height: 7px; background: #ddd; margin: 0 5.300px; }
.mymenu svg { display: inline-block; vertical-align: -2px; margin-right: 3px; }
.widget { height: 228px; margin-bottom: 10px; border: 1px solid #ccccd2; padding: 0 8px; overflow: hidden; }
.whead { height: 30px; padding-top: 1px; border-bottom: 1px dashed #b5b5b5; display: flex; align-items: center; padding-left: 1px; font-size: 9.300px; color: #222; }
.whead > b { font-weight: 500; }
.under { text-decoration: underline; text-underline-offset: 1.500px; }
.whead i { width: 1px; height: 8px; background: #ddd; margin: 0 6.500px; }
.whead span { margin: 0 3px 0 auto; font-size: 8.400px; color: #555; }
.whead span b { color: #222; font-weight: 500; }
.cards { display: flex; gap: 5.500px; padding-top: 8px; height: 103.800px; border-bottom: 1px solid #eee; }
.thumb { width: 88.500px; height: 59px; background: #eee; border: 1px solid #d8d8da; overflow: hidden; }
.cards p { margin-top: 4.500px; width: 88px; line-height: 12px; font-size: 8.200px; }
.links { padding-top: 9px; }
.links p { line-height: 14.600px; height: 14.600px; font-size: 8.200px; color: #333; letter-spacing: -.02px; }

.taskbar { height: 29px; flex: none; background: #211f1e; border-top: 1px solid #3a3938; display: flex; align-items: center; padding-left: 14px; padding-top: 1px; }
.find { width: 145px; height: 20px; margin-left: 9px; border-radius: 10px; background: #f4f3f3; display: flex; align-items: center; padding: 0 3px 0 7px; color: #555; font-size: 10px; }
.find span { margin: 0 auto 0 6px; }
.run { padding: 5px 0; background: linear-gradient(#9b9b9b, #9b9b9b) center bottom / 4px 2px no-repeat; }
.i1 { margin-left: 9px; }
.i2 { margin-left: 12px; }
.i3 { margin-left: 13px; }
.i4 { margin-left: 12.500px; }
.i5 { width: 26px; height: 27px; margin-left: 8px; border-radius: 3px; background: linear-gradient(#57aee0, #57aee0) center bottom / 9px 2px no-repeat, #343332; display: flex; align-items: center; justify-content: center; }
.i6 { margin-left: 7.500px; }
.i7 { margin-left: 12px; }
.clock { margin: 0 13px 0 auto; text-align: right; color: #eee; font-size: 8.200px; line-height: 10.500px; }
.cursor { position: absolute; left: 508px; top: 538px; }
</style>
